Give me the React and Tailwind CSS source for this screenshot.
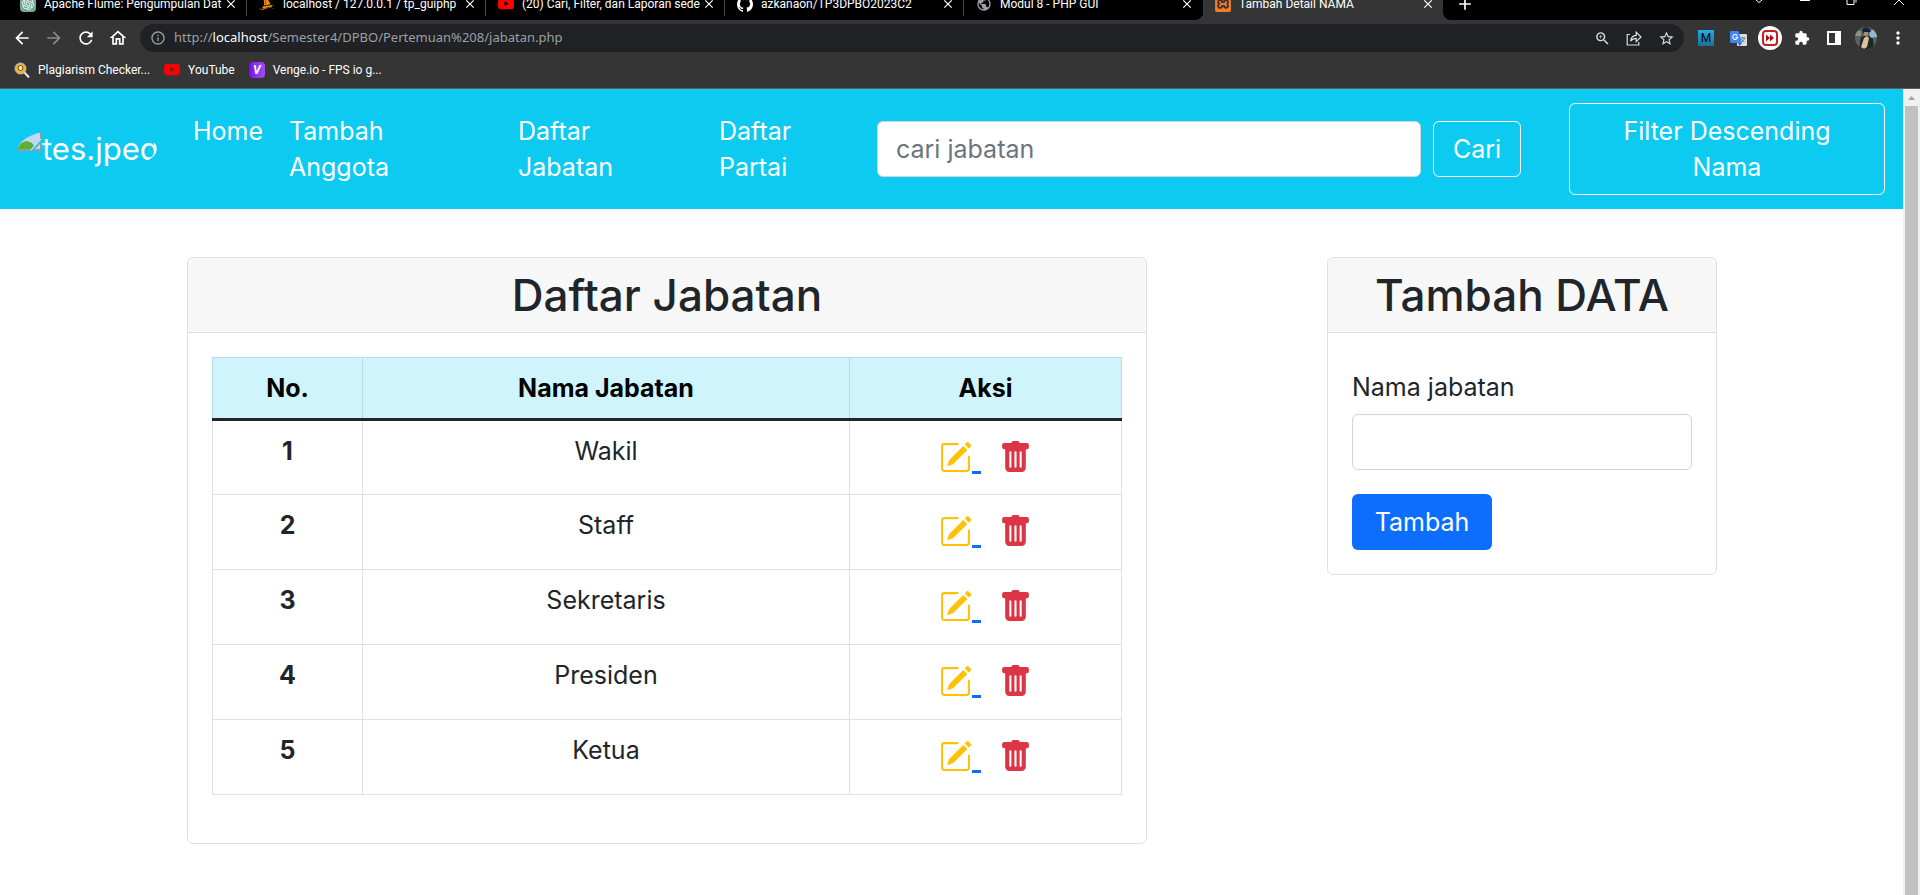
import { BsPencilSquare, BsTrashFill, BsYoutube } from "react-icons/bs";
import { SiGithub, SiOpenai, SiPhpmyadmin, SiXampp } from "react-icons/si";
import {
  MdAdd, MdArrowBack, MdArrowForward, MdClose, MdExtension, MdInfoOutline, MdMoreVert,
  MdOutlineHome, MdPublic, MdRefresh, MdStarBorder, MdZoomIn,
} from "react-icons/md";

const tabs = [
  { title: "Apache Flume: Pengumpulan Dat", icon: <span className="flex size-4 items-center justify-center rounded-sm bg-[#74aa9c]"><SiOpenai className="size-3 text-white" /></span> },
  { title: "localhost / 127.0.0.1 / tp_guiphp", icon: <SiPhpmyadmin className="size-4 text-[#f29111]" /> },
  { title: "(20) Cari, Filter, dan Laporan sede", icon: <BsYoutube className="size-4 text-[#ff0000]" /> },
  { title: "azkanaon/TP3DPBO2023C2", icon: <SiGithub className="size-4 text-white" /> },
  { title: "Modul 8 - PHP GUI", icon: <MdPublic className="size-4 text-[#9aa0a6]" /> },
];

const links = [
  { label: "Home", width: "w-[96px]" },
  { label: "Tambah Anggota", width: "w-[229px]" },
  { label: "Daftar Jabatan", width: "w-[201px]" },
  { label: "Daftar Partai", width: "w-[158px]" },
];

const rows = ["Wakil", "Staff", "Sekretaris", "Presiden", "Ketua"];

function ShareIcon() {
  return (
    <svg viewBox="0 0 16 16" className="size-4" fill="none" stroke="currentColor" strokeWidth="1.2">
      <path d="M4 4.5H1.2V15h11.6v-3" />
      <path d="M4.6 11.2C5 7.6 7 5.6 10.2 5.4V2.2L15 7l-4.8 4.600V8.400c-2.400 0-4.200.8-5.600 2.800Z" />
    </svg>
  );
}

function TranslateIcon() {
  return (
    <svg viewBox="0 0 17 17" className="size-[17px]">
      <rect x="7" y="4" width="10" height="12" rx="1" fill="#dadce0" />
      <path d="M10.500 8h5M13 7v1M14.500 8c-.5 2-1.500 3-3 4M11.500 9c.5 1.500 2 2.500 3 3" stroke="#5f7d8c" fill="none" />
      <path d="M1 1h7.500L12 13H1a1 1 0 0 1-1-1V2a1 1 0 0 1 1-1Z" fill="#4285f4" />
      <path d="m8 13 4 0-2.500 3Z" fill="#3b5bdb" />
      <path d="M7.200 5.600A2.400 2.400 0 1 0 7.600 7.200H5.400" stroke="#fff" fill="none" strokeWidth="1.100" />
    </svg>
  );
}

function ForwardIcon() {
  return (
    <svg viewBox="0 0 24 24" className="size-6">
      <circle cx="12" cy="12" r="12" fill="#fff" />
      <rect x="5" y="5" width="14" height="14" rx="3" fill="#fff" stroke="#c5221f" strokeWidth="2" />
      <path d="M8 8.500l4 3.500-4 3.500ZM12 8.500l4 3.500-4 3.500Z" fill="#a50e0e" />
    </svg>
  );
}

function Avatar() {
  return (
    <svg viewBox="0 0 22 22" className="size-[22px]">
      <clipPath id="avatar"><circle cx="11" cy="11" r="11" /></clipPath>
      <g clipPath="url(#avatar)">
        <rect width="22" height="22" fill="#59635c" />
        <path d="M14 3h8v7l-7 1Z" fill="#8fb9d0" />
        <path d="M0 4h6v5H0Z" fill="#8b8f86" />
        <path d="M7 2l4-2 4 2 1 3-8 1Z" fill="#16233f" />
        <path d="M9 5h4v3l-2 1.500L9 8Z" fill="#a98a72" />
        <path d="M4 22 6 10l4-1h4l4 3 1 10Z" fill="#1f2624" />
        <path d="m6 20 3-9 3-2 2 2-2 9-3 2Z" fill="#d7c3a0" />
      </g>
    </svg>
  );
}

function SearchCoinIcon() {
  return (
    <svg viewBox="0 0 16 16" className="size-4">
      <path d="m10 10 5 5.500" stroke="#e8e8e8" strokeWidth="2" />
      <circle cx="6.500" cy="6.500" r="5.500" fill="#f2b632" stroke="#b9b9b9" />
      <circle cx="6.500" cy="6" r="2.500" fill="#e8e8e8" stroke="#6b4a10" />
    </svg>
  );
}

function BrokenImage() {
  return (
    <svg viewBox="0 0 24 18" className="mt-[7px] h-[18px] w-6 shrink-0">
      <path d="M0 0h24v6L13 18H0Z" fill="#c3d7f5" />
      <path d="M0 18v-3c2-5 7-8 12-6 2 1 3 2 4 3.500L11.500 18Z" fill="#5bb033" />
      <path d="M0 17h12.500M23 0v6" stroke="#9a9a9a" strokeWidth="2" />
      <path d="M24 8v10h-9.500Z" fill="#9a9a9a" />
      <path d="M22 11v5h-5Z" fill="#c3d7f5" />
    </svg>
  );
}

function Browser() {
  return (
    <header className="border-b border-[#5c5c5c] bg-[#353535] font-[Roboto,sans-serif] text-xs text-white">
      <div className="flex h-5 items-start overflow-hidden bg-[#353535]">
        <div className="flex h-5 w-[1203px] items-start rounded-br-lg bg-black pl-2">
          {tabs.map((tab) => (
            <div key={tab.title} className="flex h-4 min-w-0 flex-1 items-start border-r border-[#4a4a4a] pr-2 pl-3 last:border-black">
              <div className="-mt-1 flex min-w-0 flex-1 items-center gap-2">
                <span className="shrink-0">{tab.icon}</span>
                <span className="min-w-0 flex-1 leading-4 whitespace-nowrap">{tab.title}</span>
                <button aria-label="Close tab"><MdClose className="size-3.5" /></button>
              </div>
            </div>
          ))}
        </div>
        <div className="flex h-5 w-[240px] items-start bg-[#353535] pr-2 pl-3">
          <div className="-mt-1 flex flex-1 items-center gap-2">
            <SiXampp className="size-4 text-[#fb7a24]" />
            <span className="flex-1 leading-4">Tambah Detail NAMA</span>
            <button aria-label="Close tab"><MdClose className="size-3.5" /></button>
          </div>
        </div>
        <div className="flex h-5 flex-1 items-start justify-between rounded-bl-lg bg-black pr-4 pl-3">
          <button aria-label="New tab" className="-mt-1.5"><MdAdd className="size-5" /></button>
          <svg viewBox="0 0 149 6" className="h-1.5 w-[149px]" fill="none" stroke="#fff">
            <path d="m1 0 3 2.500L7 0M45 .5h10M92 0v4.500h7V0M101 0v2.500M139 5l5-5 5 5" />
          </svg>
        </div>
      </div>
      <div className="flex h-9 items-center gap-1.5 px-1.5">
        <div className="flex items-center">
          <button aria-label="Back" className="flex w-8 justify-center"><MdArrowBack className="size-5" /></button>
          <button aria-label="Forward" className="flex w-8 justify-center"><MdArrowForward className="size-5 text-[#8b8b8b]" /></button>
          <button aria-label="Reload" className="flex w-8 justify-center"><MdRefresh className="size-5" /></button>
          <button aria-label="Home page" className="flex w-8 justify-center"><MdOutlineHome className="size-5" /></button>
        </div>
        <div className="flex h-7 flex-1 items-center gap-2 rounded-full bg-[#202124] pr-0.5 pl-2.5">
          <MdInfoOutline className="size-4 text-[#9aa0a6]" />
          <span className="flex-1 font-['Noto_Sans'] text-[13px] text-[#9aa0a6]">http://<span className="text-white">localhost</span>/Semester4/DPBO/Pertemuan%208/jabatan.php</span>
          <div className="flex items-center text-[#dadce0]">
            <span className="flex w-8 justify-center"><MdZoomIn className="size-[17px]" /></span>
            <span className="flex w-8 justify-center"><ShareIcon /></span>
            <span className="flex w-8 justify-center"><MdStarBorder className="size-[17px]" /></span>
          </div>
        </div>
        <div className="flex items-center">
          <span className="flex w-8 justify-center"><span className="flex size-4 items-center justify-center bg-linear-to-b from-[#29abe2] to-[#1b6f93] text-black">M</span></span>
          <span className="flex w-8 justify-center"><TranslateIcon /></span>
          <span className="flex w-8 justify-center"><ForwardIcon /></span>
          <span className="flex w-8 justify-center"><MdExtension className="size-4" /></span>
          <span className="flex w-8 justify-center"><span className="flex size-3.5 justify-end border-2 border-white"><span className="w-1 bg-white" /></span></span>
          <span className="flex w-8 justify-center"><Avatar /></span>
          <button aria-label="Menu" className="flex w-8 justify-center"><MdMoreVert className="size-5" /></button>
        </div>
      </div>
      <div className="flex h-8 items-center gap-3.5 px-3.5 pb-1">
        <a href="#plagiarism" className="flex items-center gap-2"><SearchCoinIcon />Plagiarism Checker...</a>
        <a href="#youtube" className="flex items-center gap-2"><BsYoutube className="size-4 text-[#ff0000]" />YouTube</a>
        <a href="#venge" className="flex items-center gap-2"><span className="flex size-4 items-center justify-center rounded-sm bg-linear-to-r from-[#7a00f5] to-[#a24bf0] font-bold italic">V</span>Venge.io - FPS io g...</a>
      </div>
    </header>
  );
}

function Card({ title, className, children }) {
  return (
    <section className={`rounded-md border border-[#dfdfdf] ${className}`}>
      <h1 className="rounded-t-md border-b border-[#dfdfdf] bg-[#f7f7f7] py-3 text-center text-[44px] leading-[50px] font-medium">{title}</h1>
      {children}
    </section>
  );
}

export default function App() {
  return (
    <div className="flex h-screen flex-col bg-white font-[Inter,sans-serif] text-[#212529]">
      <Browser />
      <div className="flex min-h-0 flex-1">
        <div className="min-w-0 flex-1 overflow-hidden text-[25px] leading-9">
          <nav className="flex items-center bg-[#0dcaf0] px-[18px] py-3.5 text-white">
            <a href="#top" className="mr-9 flex w-[139px] shrink-0 items-start overflow-hidden rounded-[50%] text-[31px] leading-[46px]">
              <BrokenImage />
              tes.jpeg
            </a>
            <div className="flex shrink-0 self-stretch py-2.5">
              {links.map((link) => (
                <div key={link.label} className={link.width}>
                  <a href="#page" className="block w-min">{link.label}</a>
                </div>
              ))}
            </div>
            <form className="flex flex-1 gap-3">
              <input aria-label="cari jabatan" placeholder="cari jabatan" className="h-14 min-w-0 flex-1 rounded-md border border-[#ced4da] bg-white px-[18px] text-[#212529] placeholder:text-[#6c757d]" />
              <button type="button" className="h-14 w-[88px] rounded-md border border-white">Cari</button>
            </form>
            <button className="ml-12 w-[316px] rounded-md border border-white px-12 py-[9px]">Filter Descending Nama</button>
          </nav>
          <main className="flex items-start justify-between pt-12 pr-[186px] pl-[187px]">
            <Card title="Daftar Jabatan" className="w-[960px]">
              <div className="px-6 pt-6 pb-12">
                <table className="w-full table-fixed border-collapse text-center">
                  <colgroup>
                    <col className="w-[150px]" />
                    <col />
                    <col className="w-[272px]" />
                  </colgroup>
                  <thead className="border-b-[3px] border-[#212529] bg-[#cff4fc] text-black">
                    <tr className="h-[62px]">
                      {["No.", "Nama Jabatan", "Aksi"].map((h) => (
                        <th key={h} className="border border-b-[3px] border-[#badce3] border-b-[#212529] font-bold">{h}</th>
                      ))}
                    </tr>
                  </thead>
                  <tbody>
                    {rows.map((name, i) => (
                      <tr key={name} className="h-[75px] align-top">
                        <th className="border border-[#dee2e6] pt-3 font-bold">{i + 1}</th>
                        <td className="border border-[#dee2e6] pt-3">{name}</td>
                        <td className="border border-[#dee2e6] pt-5 pb-5">
                          <div className="flex justify-center gap-[18px]">
                            <a href="#edit" aria-label={`Edit ${name}`} className="flex items-end">
                              <BsPencilSquare className="size-[33px] text-[#ffc107]" />
                              <span className="h-[3px] w-[9px] bg-[#0d6efd]" />
                            </a>
                            <a href="#delete" aria-label={`Hapus ${name}`}><BsTrashFill className="size-[33px] text-[#dc3545]" /></a>
                          </div>
                        </td>
                      </tr>
                    ))}
                  </tbody>
                </table>
              </div>
            </Card>
            <Card title="Tambah DATA" className="w-[390px]">
              <form className="flex flex-col items-start px-6 pt-9 pb-6">
                <label htmlFor="jabatan">Nama jabatan</label>
                <input id="jabatan" className="mt-[9px] h-14 w-full rounded-md border border-[#ced4da] px-[18px]" />
                <button type="button" className="mt-6 h-14 w-[140px] rounded-md bg-[#0d6efd] text-white">Tambah</button>
              </form>
            </Card>
          </main>
        </div>
        <div className="flex w-[17px] flex-col items-center bg-[#f1f1f1]">
          <svg viewBox="0 0 17 17" className="size-[17px]"><path d="M5 11h7L8.500 7Z" fill="#a3a3a3" /></svg>
          <div className="w-[13px] flex-1 bg-[#c1c1c1]" />
        </div>
      </div>
    </div>
  );
}
